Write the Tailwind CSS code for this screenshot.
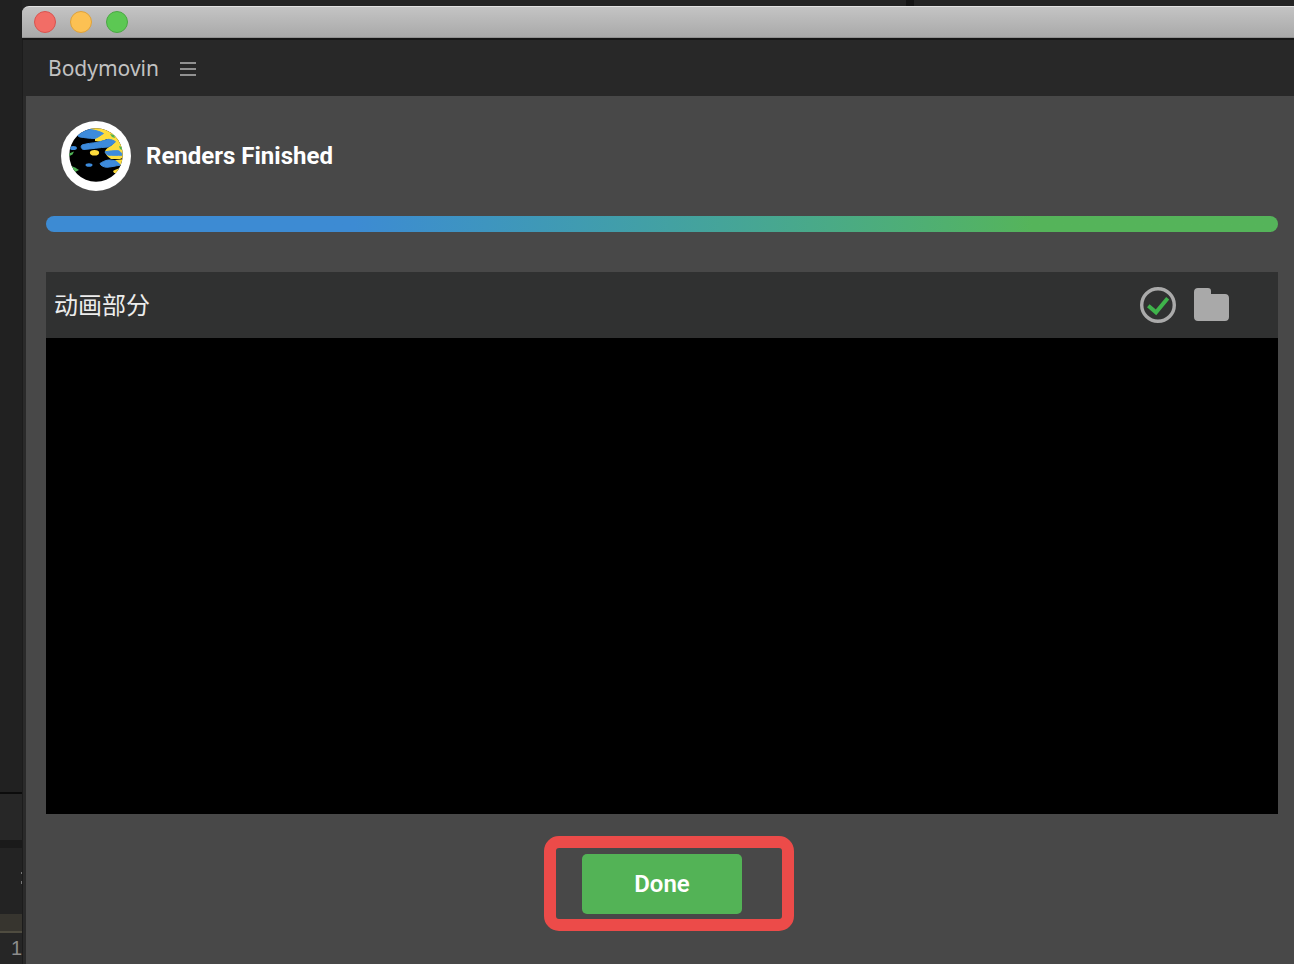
<!DOCTYPE html>
<html>
<head>
<meta charset="utf-8">
<script src="https://cdn.jsdelivr.net/npm/@tailwindcss/browser@4"></script>
</head>
<body class="m-0 h-[964px] w-[1294px] overflow-hidden bg-[#242424] font-['Roboto',sans-serif]">
<div class="flex h-[964px] w-[1294px]">
  <!-- background app sliver -->
  <div class="flex h-full w-[22px] shrink-0 flex-col bg-[#212121]">
    <div class="h-[792px] bg-[#212121]"></div>
    <div class="h-[2px] bg-[#0c0c0c]"></div>
    <div class="h-[46px] bg-[#272727]"></div>
    <div class="h-[8px] bg-[#1a1a1a]"></div>
    <div class="flex h-[66px] flex-col items-end gap-[7px] bg-[#232323] pt-[24px]">
      <span class="h-[2px] w-[1px] bg-[#777777]"></span>
      <span class="h-[3px] w-[1px] bg-[#777777]"></span>
    </div>
    <div class="h-[19px] border-b-2 border-b-[#4f4c40] bg-[#37352f]"></div>
    <div class="flex flex-1 items-center justify-end bg-[#262626] pb-[1px] font-['Liberation_Sans',sans-serif] text-[20px] text-[#8c8c8c]">1</div>
  </div>
  <!-- window -->
  <div class="flex h-full min-w-0 flex-1 flex-col">
    <div class="flex h-[6px] shrink-0 bg-[#242424] pl-[884px]"><span class="w-[8px] bg-[#151515]"></span></div>
    <div class="flex h-[32px] shrink-0 items-center gap-[14px] rounded-tl-[7px] border-t border-b border-t-[#e2e2e2] border-b-[#909090] bg-gradient-to-b from-[#c4c4c4] to-[#a9a9a9] pl-[12px]">
      <span class="h-[22px] w-[22px] rounded-full border border-[#d9534f] bg-[#f26d66]"></span>
      <span class="h-[22px] w-[22px] rounded-full border border-[#dfa23a] bg-[#fcc153]"></span>
      <span class="h-[22px] w-[22px] rounded-full border border-[#4aa843] bg-[#5cc853]"></span>
    </div>
    <div class="h-[2px] shrink-0 bg-[#161616]"></div>
    <div class="flex h-[56px] shrink-0 items-center gap-[21px] border-l border-l-[#1c1c1c] bg-[#282828] pl-[25px]">
      <span class="font-['Noto_Sans',sans-serif] text-[21px] leading-none text-[#c2c2c2]">Bodymovin</span>
      <svg width="16" height="14" viewBox="0 0 16 14" class="mt-[1px]"><path d="M0 1h16M0 7h16M0 13h16" stroke="#b4b4b4" stroke-width="1.5" fill="none"/></svg>
    </div>
    <div class="flex min-h-0 flex-1 border-l border-l-[#1c1c1c]">
      <div class="w-[3px] shrink-0 bg-[#2a2a2a]"></div>
      <div class="flex min-w-0 flex-1 flex-col bg-[#484848] pl-[20px] pr-[16px]">
        <div class="flex h-[120px] shrink-0 items-center gap-[15px] pb-[1px] pl-[15px]">
          <svg width="70" height="70" viewBox="0 0 70 70" class="shrink-0">
            <defs><clipPath id="c"><circle cx="35" cy="34" r="26.7"/></clipPath></defs>
            <circle cx="35" cy="35" r="35" fill="#fff"/>
            <circle cx="35" cy="34" r="26.7" fill="#000"/>
            <g clip-path="url(#c)">
              <path d="M29 7H52L64 20V36L59 38L50 38C47 36 45 34 44 31C44 29 46 27 48 26C50 25 52 23 54 21L46 18C42 20 38 21 34 20L34 17Z" fill="#fddc3c"/>
              <g fill="#3d8bdc" stroke="#3d8bdc" stroke-width="1">
                <path d="M17 14C21 11 25 9 29 8.500C34 9 39 10.500 42.500 12.500C39 14.500 37 16.500 34 17.500C28 17.500 23 16.500 19 16C17.500 15.500 16.500 15 17 14Z"/>
                <path d="M21 24C26 22.500 31 22 36 21.500C40 20.500 44 19 47.500 18.300C50 18.300 53 19.500 54.500 20.800C52 23 50 25 47 26C38 26.500 30 28 22.500 28.500C20 28 19.500 25 21 24Z"/>
                <path d="M44 30.800C48 30 53 29.500 57.500 29.700C59.500 30.500 61 32.500 61 34.200C56 34.500 52 34.300 47.500 34.200C45.500 33.500 44.200 32 44 30.800Z"/>
                <path d="M39 42.500C41 41 44 39.500 47.500 39C51 38.800 55 40 59.500 40.700C60.500 42 60 43.500 59 44.200C54 45 50 46 45.500 46.300C42.500 46 39.500 44.500 39 42.500Z"/>
              </g>
              <path d="M54 39L64 38V45L60 44C58 42 56 40 54 39Z" fill="#fddc3c"/>
              <ellipse cx="33.500" cy="31.800" rx="4.600" ry="2.800" fill="#fddc3c"/>
              <ellipse cx="28" cy="44" rx="3.500" ry="1.800" fill="#3d8bdc"/>
              <ellipse cx="12.300" cy="27" rx="3.600" ry="2.100" fill="#3d8bdc"/>
              <path d="M7 33L13 30.500L11.500 33.500L7.500 35.500Z" fill="#4fb356"/>
              <path d="M9 44.500L14 46.500L18 49L14 51L10 48Z" fill="#4fb356"/>
              <path d="M52 50C54 48.500 57 47.500 60 47L58 52L53 52Z" fill="#fddc3c"/>
              <path d="M49 13L53 14L54 17L51 16Z" fill="#4fb356"/>
              <path d="M58 25L61 26L61 29L59 28Z" fill="#4fb356"/>
            </g>
          </svg>
          <span class="text-[24px] leading-none font-bold text-white">Renders Finished</span>
        </div>
        <div class="h-[16px] w-full shrink-0 rounded-full bg-gradient-to-r from-[#3d8bd3] from-25% to-[#55b45a] to-80%"></div>
        <div class="mt-[40px] flex h-[66px] shrink-0 items-center justify-between bg-[#303131] pl-[8px] pr-[49px]">
          <span class="mb-[2px] font-['Noto_Sans_CJK_SC',sans-serif] text-[24px] leading-none font-normal text-[#ececec]">动画部分</span>
          <div class="flex items-center gap-[18px]">
            <svg width="36" height="36" viewBox="0 0 36 36"><circle cx="18" cy="18" r="16.300" fill="none" stroke="#aaaaaa" stroke-width="3.400"/><path d="M8.300 18.700L16 25.300L27.700 11.300" fill="none" stroke="#3fb34b" stroke-width="4"/></svg>
            <svg width="35" height="33" viewBox="0 0 35 33" class="mb-[1px]"><path d="M4 0H14C16 0 17 1 17 3V6H31C33.500 6 35 7.500 35 10V29C35 31.500 33.500 33 31 33H4C1.500 33 0 31.500 0 29V4C0 1.500 1.500 0 4 0Z" fill="#a9a9a9"/></svg>
          </div>
        </div>
        <div class="h-[476px] w-full shrink-0 bg-black"></div>
        <div class="flex flex-1 justify-center pt-[40px]">
          <div class="relative h-[60px] w-[160px]">
            <button class="flex h-full w-full items-center justify-center rounded-[5px] bg-[#53b356] text-[24px] leading-none font-semibold text-white">Done</button>
            <div class="absolute top-[-18px] left-[-38px] h-[95px] w-[250px] rounded-[15px] border-[12px] border-[#ec4b49]"></div>
          </div>
        </div>
      </div>
    </div>
  </div>
</div>
</body>
</html>
